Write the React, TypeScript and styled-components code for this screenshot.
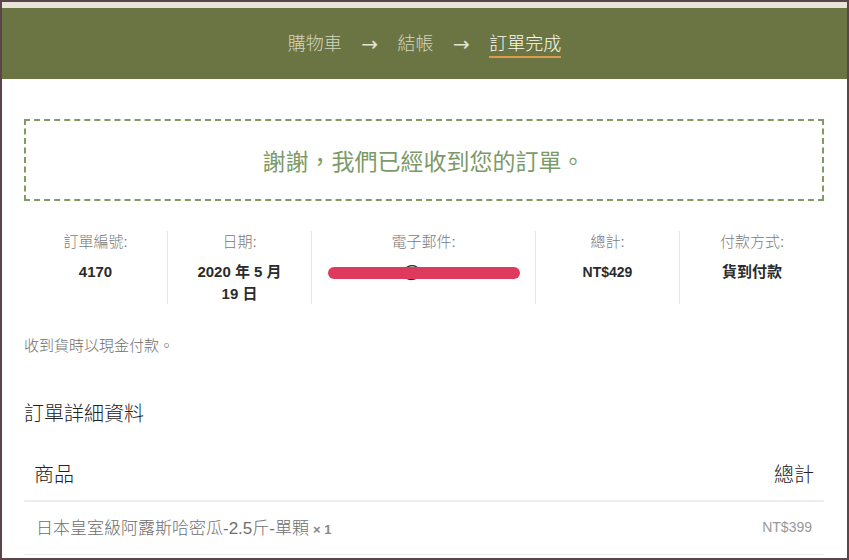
import React from "react";
import styled, { createGlobalStyle } from "styled-components";

const Global = createGlobalStyle`
  html, body { margin: 0; padding: 0; background: #fff; }
  body { font-family: "Liberation Sans", "Noto Sans CJK TC", sans-serif; }
`;

const Frame = styled.div`
  width: 849px;
  height: 560px;
  box-sizing: border-box;
  border: 2px solid #5a4548;
  overflow: hidden;
  background: #fff;
  padding-top: 6px;
  background-image: linear-gradient(#e8e4d9, #e8e4d9);
  background-size: 100% 6px;
  background-repeat: no-repeat;
`;

const Steps = styled.nav`
  height: 71px;
  background: #6a7543;
  display: flex;
  align-items: center;
  justify-content: center;
  gap: 19.5px;
  font-size: 18px;
`;

const Step = styled.span<{ $active?: boolean }>`
  color: ${(p) => (p.$active ? "#fbfaf0" : "#d5d6c0")};
  line-height: 24px;
  border-bottom: 2px solid ${(p) => (p.$active ? "#d99c4e" : "transparent")};
  padding-top: 2px;
  font-weight: 300;
`;

const Arrow = styled.span`
  color: #e2e2d0;
  font-family: "DejaVu Sans", sans-serif;
  font-size: 20px;
  line-height: 24px;
`;

const Main = styled.main`
  padding: 40px 23px 0 22px;
`;

const Notice = styled.div`
  height: 82px;
  box-sizing: border-box;
  border: 2px dashed #7f9a62;
  display: flex;
  align-items: center;
  justify-content: center;
  color: #7c9a68;
  font-size: 23px;
  font-weight: 400;
  padding-right: 1px;
`;

const Overview = styled.ul`
  list-style: none;
  margin: 30px 0 0;
  padding: 0;
  display: flex;
`;

const Item = styled.li<{ $wide?: boolean }>`
  flex: ${(p) => (p.$wide ? "0 0 224px" : "0 0 144px")};
  box-sizing: border-box;
  height: 73px;
  padding: 0 24px;
  border-right: 1px solid #e4e4e4;
  text-align: center;
  font-size: 15px;
  color: #7a7a7a;
  line-height: 22px;
  font-weight: 300;
  position: relative;
  &:last-child { border-right: none; }
`;

const Value = styled.strong<{ $size?: number }>`
  display: block;
  margin-top: 8px;
  color: #2b2b2b;
  font-weight: 700;
  font-size: ${(p) => p.$size ?? 15}px;
`;

const EmailValue = styled(Value)`
  padding-right: 24px;
  font-weight: 400;
`;

const Redaction = styled.span`
  position: absolute;
  left: 16px;
  right: 15px;
  top: 36px;
  height: 12px;
  border-radius: 6px;
  background: #de3a5e;
`;

const Payment = styled.p`
  margin: 32px 0 0;
  font-size: 15px;
  line-height: 20px;
  color: #6e6e6e;
  font-weight: 300;
`;

const Heading = styled.h2`
  margin: 44px 0 0;
  font-size: 20px;
  line-height: 28px;
  font-weight: 300;
  color: #222;
`;

const Table = styled.div`
  margin-top: 26px;
`;

const HeadRow = styled.div`
  display: flex;
  justify-content: space-between;
  height: 48px;
  box-sizing: border-box;
  padding: 7px 10px 0;
  font-size: 20px;
  line-height: 28px;
  font-weight: 300;
  color: #222;
  border-bottom: 2px solid #ececec;
`;

const BodyRow = styled.div`
  display: flex;
  justify-content: space-between;
  align-items: center;
  height: 53px;
  box-sizing: border-box;
  padding: 0 12px 3px 12px;
  font-size: 17px;
  color: #6e6e6e;
  font-weight: 300;
  border-bottom: 1px solid #ececec;
`;

const Qty = styled.span`
  font-size: 13px;
  font-weight: 700;
  color: #888;
  margin-left: 4px;
`;

const Price = styled.span`
  font-size: 14px;
  color: #999;
  font-weight: 400;
`;

export default function App() {
  return (
    <>
      <Global />
      <Frame>
        <Steps>
          <Step>購物車</Step>
          <Arrow>→</Arrow>
          <Step>結帳</Step>
          <Arrow>→</Arrow>
          <Step $active>訂單完成</Step>
        </Steps>
        <Main>
          <Notice>謝謝，我們已經收到您的訂單。</Notice>
          <Overview>
            <Item>
              訂單編號:
              <Value>4170</Value>
            </Item>
            <Item>
              日期:
              <Value>2020 年 5 月 19 日</Value>
            </Item>
            <Item $wide>
              電子郵件:
              <EmailValue $size={18}>@</EmailValue>
              <Redaction />
            </Item>
            <Item>
              總計:
              <Value $size={14}>NT$429</Value>
            </Item>
            <Item>
              付款方式:
              <Value>貨到付款</Value>
            </Item>
          </Overview>
          <Payment>收到貨時以現金付款。</Payment>
          <Heading>訂單詳細資料</Heading>
          <Table>
            <HeadRow>
              <span>商品</span>
              <span>總計</span>
            </HeadRow>
            <BodyRow>
              <span>
                日本皇室級阿露斯哈密瓜-2.5斤-單顆<Qty>× 1</Qty>
              </span>
              <Price>NT$399</Price>
            </BodyRow>
          </Table>
        </Main>
      </Frame>
    </>
  );
}
